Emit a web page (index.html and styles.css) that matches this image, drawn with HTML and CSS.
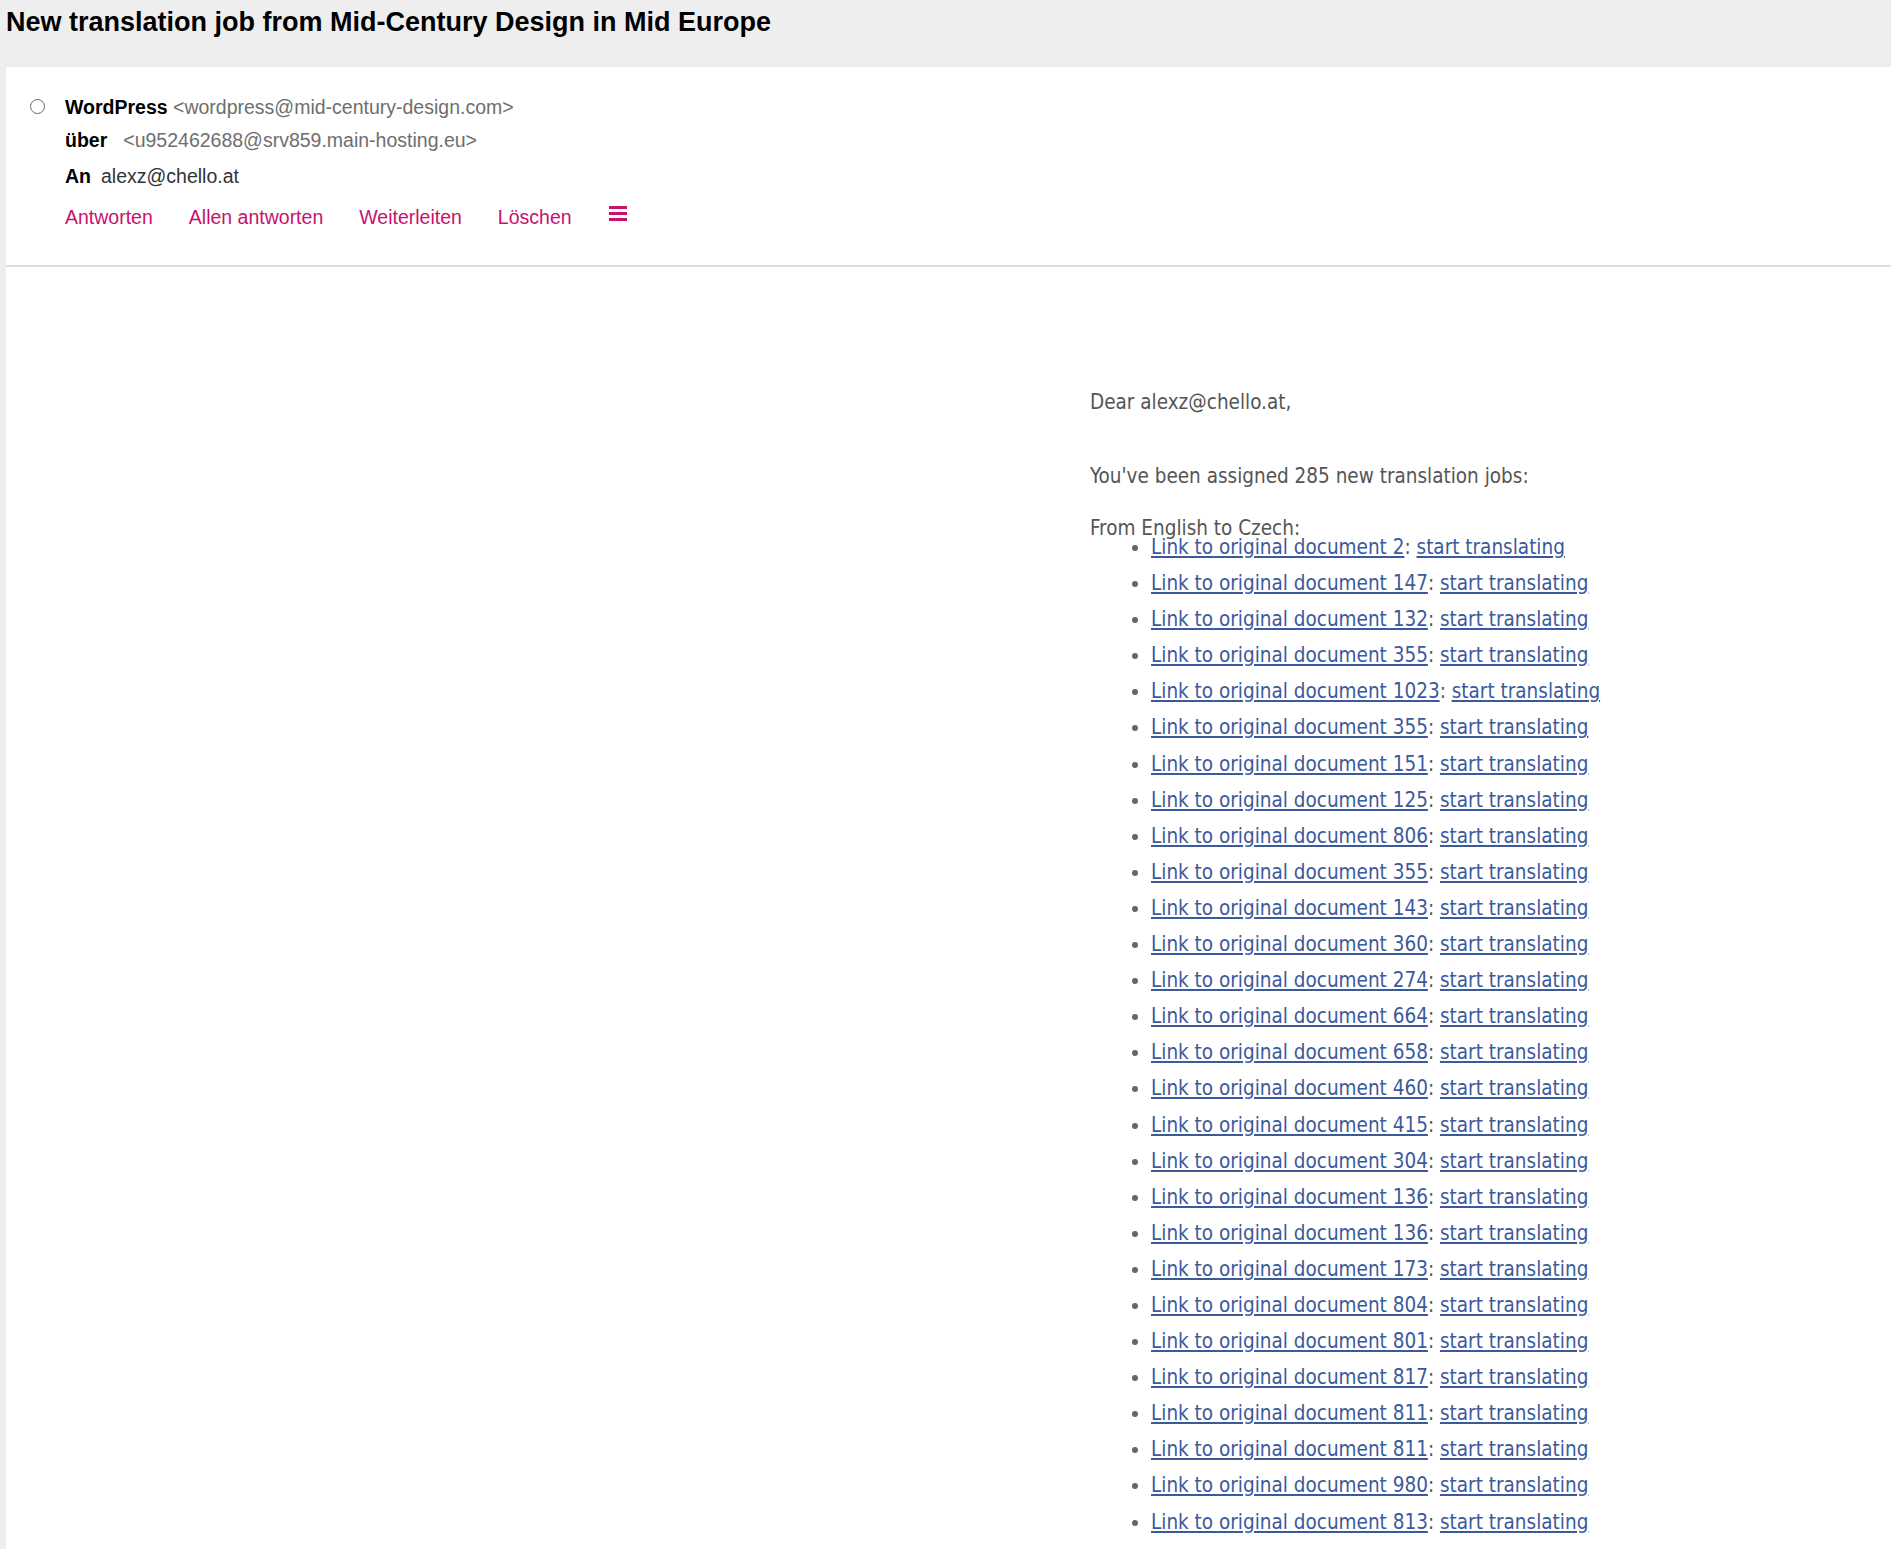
FILE: index.html
```html
<!DOCTYPE html>
<html lang="de">
<head>
<meta charset="utf-8">
<title>New translation job from Mid-Century Design in Mid Europe</title>
<link rel="stylesheet" href="styles.css">
</head>
<body>
<div class="subject">New translation job from Mid-Century Design in Mid Europe</div>
<div class="panel">
  <div class="msg-head">
    <span class="radio"></span>
    <div class="meta">
      <div class="row row-from"><b>WordPress</b> <span class="addr">&lt;wordpress@mid-century-design.com&gt;</span></div>
      <div class="row row-via"><b>über</b><span class="addr via">&lt;u952462688@srv859.main-hosting.eu&gt;</span></div>
      <div class="row row-to"><b>An</b><span class="to">alexz@chello.at</span></div>
      <div class="actions">
        <a href="#">Antworten</a>
        <a href="#">Allen antworten</a>
        <a href="#">Weiterleiten</a>
        <a href="#">Löschen</a>
        <span class="menu" aria-label="Menü">
          <svg width="18" height="15" viewBox="0 0 18 15"><rect x="0" y="0" width="18" height="3" fill="#c8106f"/><rect x="0" y="6" width="18" height="3" fill="#c8106f"/><rect x="0" y="12" width="18" height="3" fill="#c8106f"/></svg>
        </span>
      </div>
    </div>
  </div>
  <div class="msg-body">
    <div class="mail">
      <p class="dear">Dear alexz@chello.at,</p>
      <p class="assigned">You've been assigned 285 new translation jobs:</p>
      <p class="from">From English to Czech:</p>
      <ul class="jobs">
        <li><a href="#">Link to original document 2</a>: <a href="#">start translating</a></li>
        <li><a href="#">Link to original document 147</a>: <a href="#">start translating</a></li>
        <li><a href="#">Link to original document 132</a>: <a href="#">start translating</a></li>
        <li><a href="#">Link to original document 355</a>: <a href="#">start translating</a></li>
        <li><a href="#">Link to original document 1023</a>: <a href="#">start translating</a></li>
        <li><a href="#">Link to original document 355</a>: <a href="#">start translating</a></li>
        <li><a href="#">Link to original document 151</a>: <a href="#">start translating</a></li>
        <li><a href="#">Link to original document 125</a>: <a href="#">start translating</a></li>
        <li><a href="#">Link to original document 806</a>: <a href="#">start translating</a></li>
        <li><a href="#">Link to original document 355</a>: <a href="#">start translating</a></li>
        <li><a href="#">Link to original document 143</a>: <a href="#">start translating</a></li>
        <li><a href="#">Link to original document 360</a>: <a href="#">start translating</a></li>
        <li><a href="#">Link to original document 274</a>: <a href="#">start translating</a></li>
        <li><a href="#">Link to original document 664</a>: <a href="#">start translating</a></li>
        <li><a href="#">Link to original document 658</a>: <a href="#">start translating</a></li>
        <li><a href="#">Link to original document 460</a>: <a href="#">start translating</a></li>
        <li><a href="#">Link to original document 415</a>: <a href="#">start translating</a></li>
        <li><a href="#">Link to original document 304</a>: <a href="#">start translating</a></li>
        <li><a href="#">Link to original document 136</a>: <a href="#">start translating</a></li>
        <li><a href="#">Link to original document 136</a>: <a href="#">start translating</a></li>
        <li><a href="#">Link to original document 173</a>: <a href="#">start translating</a></li>
        <li><a href="#">Link to original document 804</a>: <a href="#">start translating</a></li>
        <li><a href="#">Link to original document 801</a>: <a href="#">start translating</a></li>
        <li><a href="#">Link to original document 817</a>: <a href="#">start translating</a></li>
        <li><a href="#">Link to original document 811</a>: <a href="#">start translating</a></li>
        <li><a href="#">Link to original document 811</a>: <a href="#">start translating</a></li>
        <li><a href="#">Link to original document 980</a>: <a href="#">start translating</a></li>
        <li><a href="#">Link to original document 813</a>: <a href="#">start translating</a></li>
      </ul>
    </div>
  </div>
</div>
</body>
</html>
```

FILE: styles.css
```css
html, body {
  margin: 0;
  padding: 0;
  background: #eeeeee;
}

body {
  font-family: "Liberation Sans", Arial, sans-serif;
  color: #000;
}

.subject {
  height: 67px;
  box-sizing: border-box;
  padding: 5px 0 0 6px;
  font-size: 27px;
  line-height: 34px;
  font-weight: bold;
  color: #000;
}

.panel {
  margin-left: 6px;
  background: #fff;
  min-height: calc(100vh - 67px);
}

.msg-head {
  display: flex;
  align-items: flex-start;
  padding: 26px 0 34px 24px;
  border-bottom: 2px solid #dedede;
}

.radio {
  flex: none;
  width: 13px;
  height: 13px;
  margin-top: 6px;
  border: 1.6px solid #6a6a6a;
  border-radius: 50%;
}

.meta {
  margin-left: 20px;
  font-size: 19.5px;
  line-height: 28px;
}

.row b {
  font-weight: bold;
  color: #000;
}

.row-via {
  margin-top: 5px;
}

.row-to {
  margin-top: 8px;
}

.addr {
  color: #6e6e6e;
}

.addr.via {
  margin-left: 16px;
}

.to {
  margin-left: 10px;
  color: #333;
}

.actions {
  margin-top: 13px;
  display: flex;
  align-items: center;
  gap: 36px;
}

.actions a {
  color: #c8106f;
  text-decoration: none;
}

.menu {
  display: flex;
  margin-top: -8px;
  margin-left: 1px;
}

.msg-body {
  padding: 123px 0 0 1084px;
}

.mail {
  font-family: "DejaVu Sans Condensed", "DejaVu Sans", sans-serif;
  font-stretch: condensed;
  font-size: 20.5px;
  color: #555;
}

.mail p {
  margin: 0;
  line-height: 24px;
}

.assigned {
  margin-top: 50px !important;
}

.from {
  margin-top: 28px !important;
}

.jobs {
  margin: -11px 0 0;
  padding-left: 61px;
  line-height: 36.1px;
  list-style: disc;
}

.jobs li::marker {
  color: #666;
}

.jobs a {
  color: #3b5a9c;
  text-decoration: underline;
}
```
